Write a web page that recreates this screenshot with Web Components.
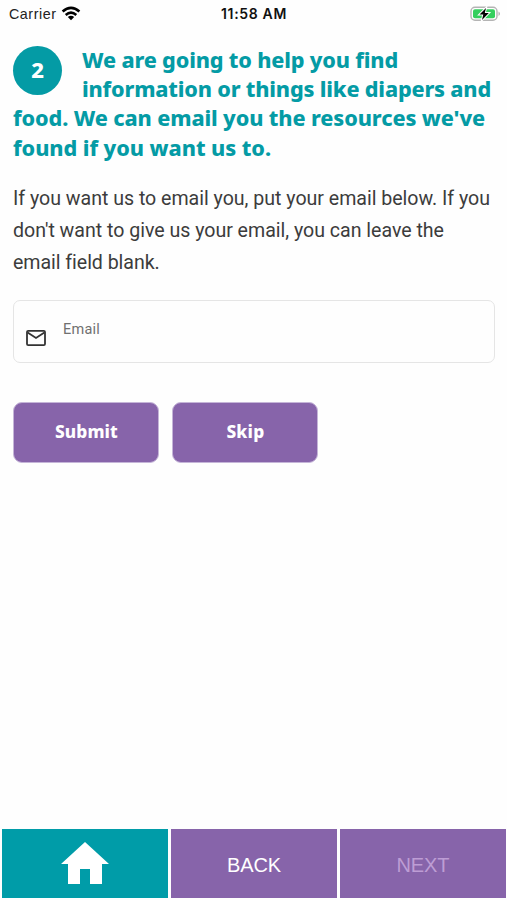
<!DOCTYPE html>
<html lang="en"><head><meta charset="utf-8"><title>Email resources</title>
<style>html,body{margin:0;height:100%;background:#fefefe}body{overflow:hidden}</style></head><body>
<resource-app></resource-app>
<script>
function define(name, html, ready) {
  customElements.define(name, class extends HTMLElement {
    constructor() { super(); this.attachShadow({mode:'open'}).innerHTML = html; }
    connectedCallback() { if (ready) ready(this); }
  });
}
// One line of text whose tracking is adjusted to fill the given width.
define('fit-line', `<style>:host{display:block;white-space:nowrap}span{display:inline-block}</style><span><slot></slot></span>`, el => {
  const s = el.shadowRoot.querySelector('span');
  const n = el.textContent.length, w = +el.getAttribute('width');
  s.style.letterSpacing = ((w - s.getBoundingClientRect().width) / n) + 'px';
});
define('status-bar', `<style>
:host{display:grid;grid-template-columns:1fr auto 1fr;align-items:center;height:28px;box-sizing:border-box;padding:0 6px 0 9px;font:14.3px/28px "Liberation Sans",sans-serif;color:#222}
.l{display:flex;align-items:center;gap:4px}.l svg{margin-top:-2px}.t{font:600 14px/28px Inter,sans-serif;color:#111;margin-right:2px}.r{display:flex;justify-content:flex-end}svg{display:block}</style>
<div class="l"><fit-line width="47.5">Carrier</fit-line><svg width="20" height="15" viewBox="0 0 20 15"><g fill="none" stroke="#000" stroke-width="2.6"><path d="M1.6 5.6Q10-1.8 18.4 5.6"/><path d="M4.7 8.9Q10 4.5 15.3 8.9"/></g><path d="M6.8 11Q10 8.3 13.2 11L10 14.3Z"/></svg></div>
<div class="t"><fit-line width="66">11:58 AM</fit-line></div>
<div class="r"><svg width="31" height="16" viewBox="0 0 31 16"><rect x="1" y="1.2" width="26" height="13" rx="4" fill="#fff" stroke="#b4b4b4" stroke-width="1.4"/><rect x="3" y="3.2" width="22" height="9" rx="2" fill="#35cf5e"/><path d="M28.5 5.5Q31.5 7.7 28.5 10Z" fill="#b4b4b4"/><path d="M16 2L9.5 8.6H13.3L12 14L18.8 7.1H14.8Z" fill="#000" stroke="#fff" stroke-width="2" paint-order="stroke"/></svg></div>`);
define('step-heading', `<style>
:host{display:block;position:relative;padding:17px 13px 0;font:800 21.6px/29.2px "Noto Sans",sans-serif;color:#049ba5}
.b{position:absolute;left:13px;top:17.5px;width:49px;height:49px;border-radius:50%;background:#049ba5;color:#fff;display:grid;place-items:center;font-size:22px}
.i{padding-left:69px}</style>
<div class="b">2</div><div class="i"><fit-line width="316">We are going to help you find</fit-line><fit-line width="409">information or things like diapers and</fit-line></div>
<fit-line width="472">food. We can email you the resources we've</fit-line><fit-line width="258">found if you want us to.</fit-line>`);
define('body-copy', `<style>:host{display:block;padding:21.6px 13px 0;font:19.6px/31.7px Roboto,sans-serif;color:#3c3c3c}</style>
<fit-line width="477">If you want us to email you, put your email below. If you</fit-line><fit-line width="431">don't want to give us your email, you can leave the</fit-line><fit-line width="146">email field blank.</fit-line>`);
define('email-field', `<style>:host{display:flex;box-sizing:border-box;margin:21.2px 12px 0 13px;height:63.5px;border:1.5px solid #e5e5e5;border-radius:7px;padding:19px 0 0 12px;gap:17px;font:14.5px/20px Roboto,sans-serif;color:#707070}svg{display:block;margin-top:9.5px}</style>
<svg width="20" height="18" viewBox="0 0 20 18" fill="none" stroke="#333" stroke-width="1.8"><rect x="1" y="1.9" width="18" height="14.2" rx="1.2"/><path d="M1.6 3.4L10 9L18.4 3.4"/></svg><fit-line width="37">Email</fit-line>`);
define('action-button', `<style>:host{display:grid;place-items:center;box-sizing:border-box;width:146px;height:61px;background:#8764aa;border:1px solid #c5b5d8;border-radius:9px;color:#fff;font:800 17.3px/24px "Noto Sans",sans-serif}</style><slot></slot>`);
define('action-row', `<style>:host{display:flex;gap:13px;padding:38.5px 13px 0 13.4px}</style><action-button><fit-line width="63">Submit</fit-line></action-button><action-button><fit-line width="38">Skip</fit-line></action-button>`);
define('nav-tab', `<style>:host{display:grid;place-items:center;box-sizing:border-box;padding-top:2px;background:#8764aa;color:#fff;font:20px/24px "Liberation Sans",sans-serif}:host([home]){background:#009ca8;padding:0 0 1px}:host([disabled]){color:#bd9dd4}</style><slot></slot>`);
define('bottom-nav', `<style>:host{display:grid;grid-template-columns:166px 166px 166px;gap:3px;height:69px;margin:auto 2px 2px}svg{display:block}</style>
<nav-tab home><svg width="48" height="42" viewBox="0 0 48 42" fill="#fff"><path d="M24 0L48 22H41V42H29V27H19V42H7V22H0Z"/></svg></nav-tab><nav-tab><fit-line width="54">BACK</fit-line></nav-tab><nav-tab disabled><fit-line width="53">NEXT</fit-line></nav-tab>`);
define('resource-app', `<style>:host{display:flex;flex-direction:column;width:507px;height:900px;background:#fefefe}</style>
<status-bar></status-bar><step-heading></step-heading><body-copy></body-copy><email-field></email-field><action-row></action-row><bottom-nav></bottom-nav>`);
</script></body></html>
